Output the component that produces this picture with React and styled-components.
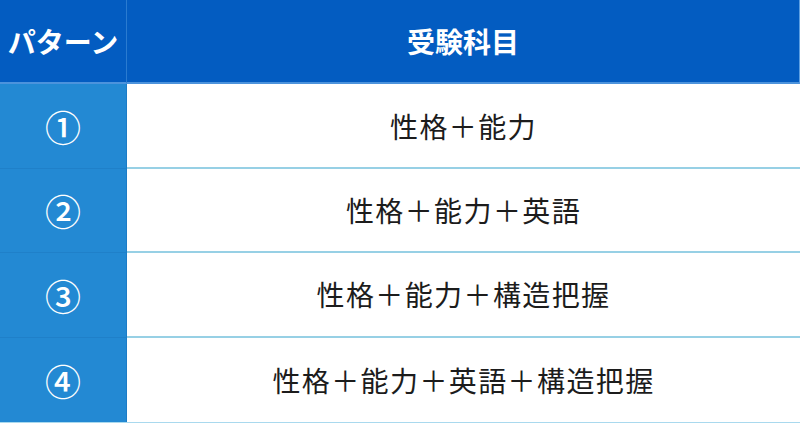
import styled, { createGlobalStyle } from 'styled-components';

const GlobalStyle = createGlobalStyle`
  html, body {
    margin: 0;
    padding: 0;
    background: #ffffff;
  }
  body {
    font-family: "Noto Sans CJK JP", "Noto Sans", sans-serif;
  }
`;

const Table = styled.div`
  display: grid;
  grid-template-columns: 127px 1fr;
  grid-template-rows: repeat(5, 84.4px);
  width: 800px;
  height: 422px;
  border-bottom: 1px solid #a9d9ee;
  box-sizing: content-box;
`;

const HeadCell = styled.div`
  display: flex;
  align-items: center;
  justify-content: center;
  background: #035cc1;
  color: #ffffff;
  font-size: 28px;
  font-weight: 700;
  border-bottom: 2px solid #4c93dc;
  border-right: ${({ $first }) => ($first ? '1px solid #2a7bd0' : '1px solid #5d9fe2')};
`;

const NumCell = styled.div`
  display: flex;
  align-items: center;
  justify-content: center;
  background: #2389d3;
  color: #ffffff;
  font-size: 36px;
  font-weight: 500;
  line-height: 1;
  border-right: 1px solid #1c7cc6;
  border-bottom: ${({ $last }) => ($last ? 'none' : '1px solid #1f80c9')};
`;

const SubjectCell = styled.div`
  display: flex;
  align-items: center;
  justify-content: center;
  background: #ffffff;
  color: #1c1c1c;
  font-size: 28px;
  letter-spacing: 1.4px;
  border-bottom: ${({ $last }) => ($last ? 'none' : '2px solid #97d0e5')};
`;

const rows = [
  { num: '①', subjects: '性格＋能力' },
  { num: '②', subjects: '性格＋能力＋英語' },
  { num: '③', subjects: '性格＋能力＋構造把握' },
  { num: '④', subjects: '性格＋能力＋英語＋構造把握' },
];

export default function App() {
  return (
    <>
      <GlobalStyle />
      <Table>
        <HeadCell $first>パターン</HeadCell>
        <HeadCell>受験科目</HeadCell>
        {rows.map((row, i) => {
          const last = i === rows.length - 1;
          return [
            <NumCell key={row.num} $last={last}>{row.num}</NumCell>,
            <SubjectCell key={row.num + '_s'} $last={last}>{row.subjects}</SubjectCell>,
          ];
        })}
      </Table>
    </>
  );
}
